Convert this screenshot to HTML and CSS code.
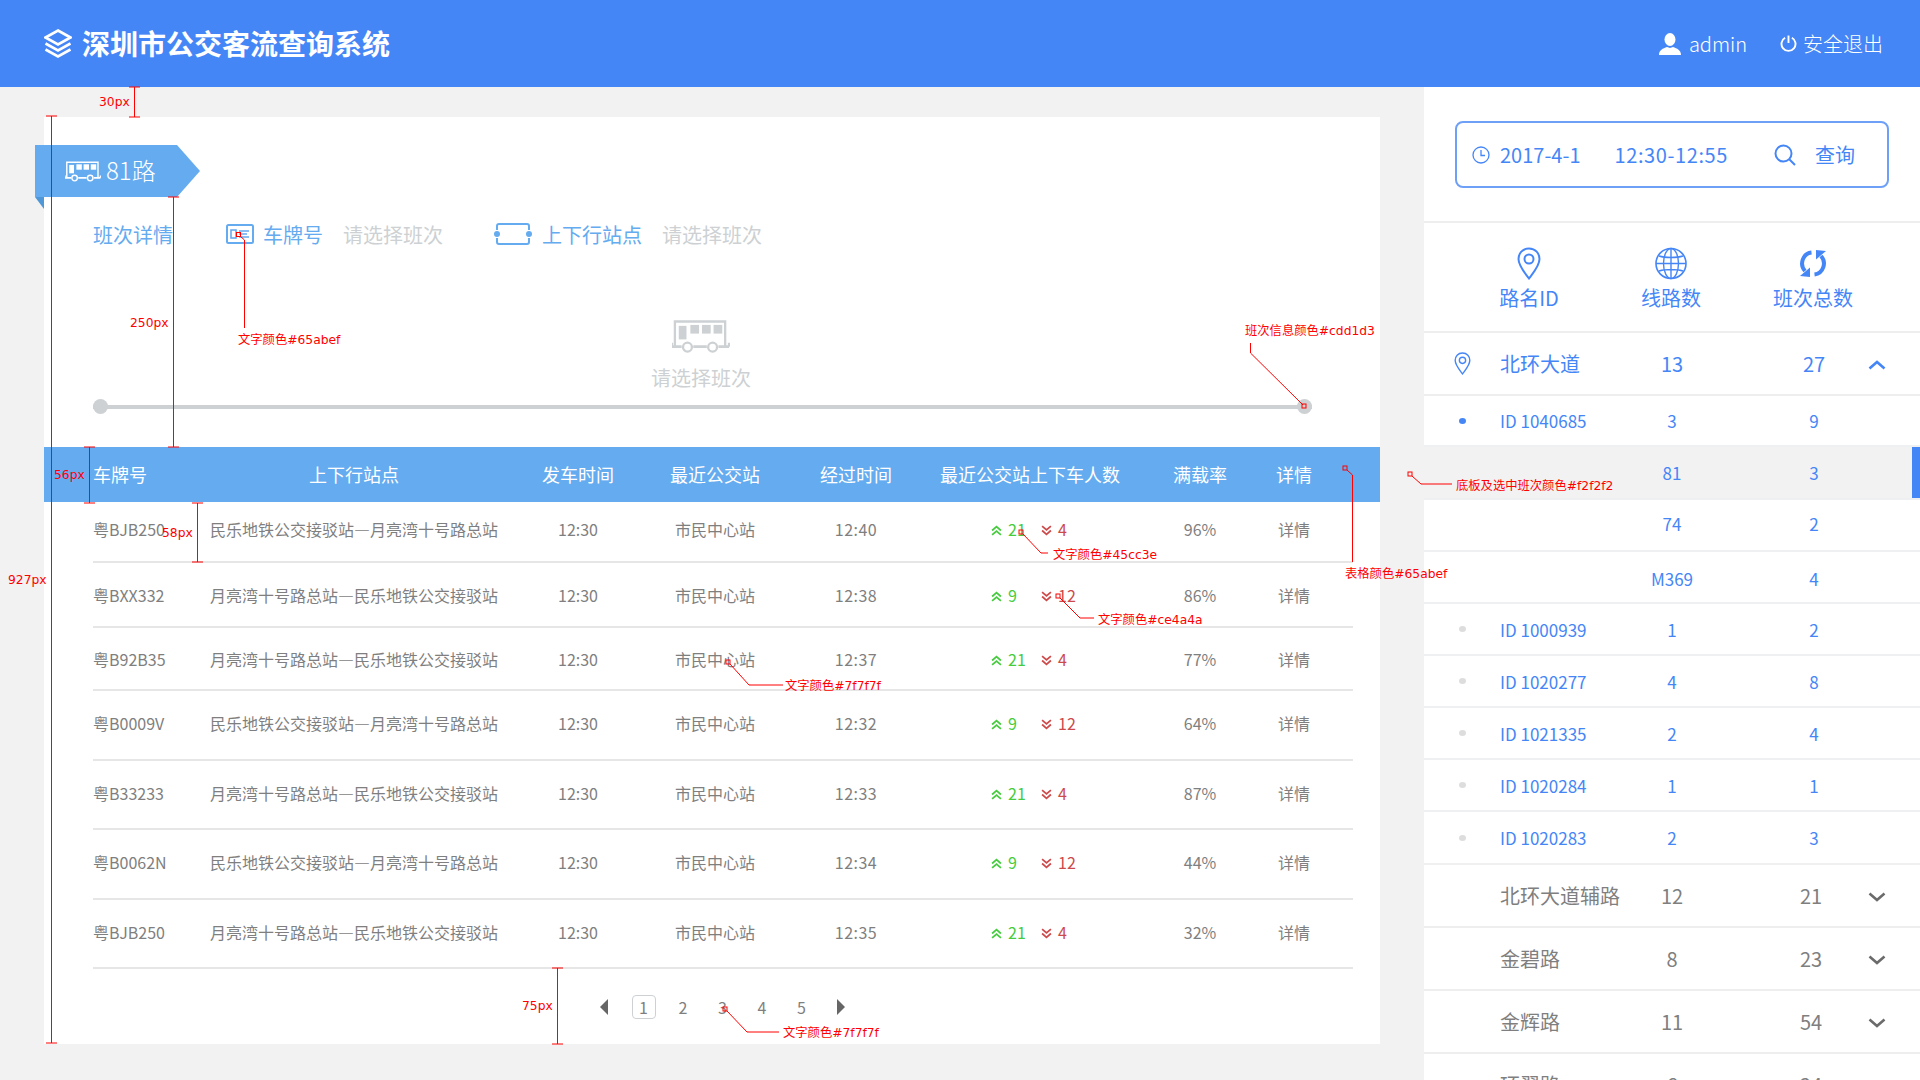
FILE: index.html
```html
<!DOCTYPE html>
<html lang="zh-CN">
<head>
    <meta charset="UTF-8">
    <title>深圳市公交客流查询系统</title>
    <link rel="stylesheet" href="styles.css">
</head>
<body>
    <svg class="defs" width="0" height="0">
        <symbol id="bus" viewBox="0 0 60 34">
            <path d="M3 27V1.5H55V27" fill="none" stroke="currentColor" stroke-width="2.4"/>
            <path d="M0 27.5H10M22 27.5H36M48 27.5H59" fill="none" stroke="currentColor" stroke-width="3"/>
            <path d="M0 23.5V27.5M59 23.5V27.5" fill="none" stroke="currentColor" stroke-width="2.4"/>
            <rect x="7" y="6" width="8" height="14" fill="currentColor"/>
            <rect x="19" y="5" width="9" height="9" fill="currentColor"/>
            <rect x="31" y="5" width="9" height="9" fill="currentColor"/>
            <rect x="43" y="5" width="9" height="9" fill="currentColor"/>
            <circle cx="16" cy="28" r="4.6" fill="none" stroke="currentColor" stroke-width="2.4"/>
            <circle cx="42" cy="28" r="4.6" fill="none" stroke="currentColor" stroke-width="2.4"/>
        </symbol>
        <symbol id="pin" viewBox="0 0 24 33">
            <path d="M12 1.5C5.5 1.5 1.5 6.5 1.5 12C1.5 19 8 26 12 31.5C16 26 22.5 19 22.5 12C22.5 6.5 18.5 1.5 12 1.5Z" fill="none" stroke="currentColor" stroke-width="2"/>
            <circle cx="12" cy="12" r="4.5" fill="none" stroke="currentColor" stroke-width="2"/>
        </symbol>
        <symbol id="up" viewBox="0 0 10 10">
            <path d="M1 5L5 1.5L9 5M1 9L5 5.5L9 9" fill="none" stroke="currentColor" stroke-width="1.6"/>
        </symbol>
        <symbol id="down" viewBox="0 0 10 10">
            <path d="M1 1L5 4.5L9 1M1 5L5 8.5L9 5" fill="none" stroke="currentColor" stroke-width="1.6"/>
        </symbol>
        <symbol id="chev-down" viewBox="0 0 18 10">
            <path d="M1.5 1.5L9 8L16.5 1.5" fill="none" stroke="currentColor" stroke-width="2.6"/>
        </symbol>
    </svg>

    <header class="topbar">
        <div class="brand">
            <svg class="brand-icon" viewBox="0 0 28 29">
                <path d="M14 1.5L26.5 8.5L14 15.5L1.5 8.5Z" fill="none" stroke="#fff" stroke-width="2.6"/>
                <path d="M1.5 14.5L14 21.5L26.5 14.5M1.5 20.5L14 27.5L26.5 20.5" fill="none" stroke="#fff" stroke-width="2.6"/>
            </svg>
            <h1 class="brand-title">深圳市公交客流查询系统</h1>
        </div>
        <div class="user-bar">
            <span class="user-item">
                <svg class="user-icon" viewBox="0 0 22 22">
                    <ellipse cx="11" cy="6.5" rx="5.5" ry="6.5" fill="#fff"/>
                    <path d="M0 22C0 17 4 15.5 8 14L11 15L14 14C18 15.5 22 17 22 22Z" fill="#fff"/>
                </svg>
                admin
            </span>
            <span class="user-item logout">
                <svg class="power-icon" viewBox="0 0 16 16">
                    <path d="M4.8 2.6A6.6 6.6 0 1 0 11.2 2.6" fill="none" stroke="#fff" stroke-width="1.8"/>
                    <path d="M8 0.5V7.5" fill="none" stroke="#fff" stroke-width="1.8"/>
                </svg>
                安全退出
            </span>
        </div>
    </header>

    <div class="layout">
        <main class="card">
            <div class="ribbon">
                <div class="ribbon-body">
                    <svg class="ribbon-bus"><use href="#bus"/></svg>
                    <span>81路</span>
                </div>
            </div>

            <div class="tabs">
                <span class="tab-title">班次详情</span>
                <svg class="plate-icon" viewBox="0 0 28 20">
                    <rect x="1" y="1" width="26" height="18" rx="1.5" fill="none" stroke="currentColor" stroke-width="2"/>
                    <rect x="5" y="6" width="5" height="8" fill="none" stroke="currentColor" stroke-width="1.6"/>
                    <path d="M13 7H23M13 10H21M13 13H23" fill="none" stroke="currentColor" stroke-width="1.6"/>
                </svg>
                <span class="tab-label">车牌号</span>
                <span class="tab-hint">请选择班次</span>
                <svg class="ticket-icon" viewBox="0 0 38 22">
                    <path d="M3 7V3C3 2 4 1 5 1H33C34 1 35 2 35 3V7M3 15V19C3 20 4 21 5 21H33C34 21 35 20 35 19V15" fill="none" stroke="currentColor" stroke-width="2"/>
                    <circle cx="3" cy="11" r="3" fill="currentColor"/>
                    <circle cx="35" cy="11" r="3" fill="currentColor"/>
                </svg>
                <span class="tab-label">上下行站点</span>
                <span class="tab-hint">请选择班次</span>
            </div>

            <div class="empty">
                <svg class="empty-bus"><use href="#bus"/></svg>
                <span>请选择班次</span>
            </div>

            <div class="timeline"></div>

            <div class="table">
                <div class="thead">
                    <div class="trow">
                        <span class="cell-left">车牌号</span>
                        <span>上下行站点</span>
                        <span>发车时间</span>
                        <span>最近公交站</span>
                        <span>经过时间</span>
                        <span>最近公交站上下车人数</span>
                        <span>满载率</span>
                        <span>详情</span>
                    </div>
                </div>
                <div class="tbody">
                    <div class="trow">
                        <span class="cell-left">粤BJB250</span>
                        <span>民乐地铁公交接驳站—月亮湾十号路总站</span>
                        <span>12:30</span>
                        <span>市民中心站</span>
                        <span class="pass-time">12:40</span>
                        <span class="flow">
                            <span class="flow-up"><svg class="arrow"><use href="#up"/></svg>21</span>
                            <span class="flow-down"><svg class="arrow"><use href="#down"/></svg>4</span>
                        </span>
                        <span>96%</span>
                        <span>详情</span>
                    </div>
                    <div class="trow">
                        <span class="cell-left">粤BXX332</span>
                        <span>月亮湾十号路总站—民乐地铁公交接驳站</span>
                        <span>12:30</span>
                        <span>市民中心站</span>
                        <span class="pass-time">12:38</span>
                        <span class="flow">
                            <span class="flow-up"><svg class="arrow"><use href="#up"/></svg>9</span>
                            <span class="flow-down"><svg class="arrow"><use href="#down"/></svg>12</span>
                        </span>
                        <span>86%</span>
                        <span>详情</span>
                    </div>
                    <div class="trow">
                        <span class="cell-left">粤B92B35</span>
                        <span>月亮湾十号路总站—民乐地铁公交接驳站</span>
                        <span>12:30</span>
                        <span>市民中心站</span>
                        <span class="pass-time">12:37</span>
                        <span class="flow">
                            <span class="flow-up"><svg class="arrow"><use href="#up"/></svg>21</span>
                            <span class="flow-down"><svg class="arrow"><use href="#down"/></svg>4</span>
                        </span>
                        <span>77%</span>
                        <span>详情</span>
                    </div>
                    <div class="trow">
                        <span class="cell-left">粤B0009V</span>
                        <span>民乐地铁公交接驳站—月亮湾十号路总站</span>
                        <span>12:30</span>
                        <span>市民中心站</span>
                        <span class="pass-time">12:32</span>
                        <span class="flow">
                            <span class="flow-up"><svg class="arrow"><use href="#up"/></svg>9</span>
                            <span class="flow-down"><svg class="arrow"><use href="#down"/></svg>12</span>
                        </span>
                        <span>64%</span>
                        <span>详情</span>
                    </div>
                    <div class="trow">
                        <span class="cell-left">粤B33233</span>
                        <span>月亮湾十号路总站—民乐地铁公交接驳站</span>
                        <span>12:30</span>
                        <span>市民中心站</span>
                        <span class="pass-time">12:33</span>
                        <span class="flow">
                            <span class="flow-up"><svg class="arrow"><use href="#up"/></svg>21</span>
                            <span class="flow-down"><svg class="arrow"><use href="#down"/></svg>4</span>
                        </span>
                        <span>87%</span>
                        <span>详情</span>
                    </div>
                    <div class="trow">
                        <span class="cell-left">粤B0062N</span>
                        <span>民乐地铁公交接驳站—月亮湾十号路总站</span>
                        <span>12:30</span>
                        <span>市民中心站</span>
                        <span class="pass-time">12:34</span>
                        <span class="flow">
                            <span class="flow-up"><svg class="arrow"><use href="#up"/></svg>9</span>
                            <span class="flow-down"><svg class="arrow"><use href="#down"/></svg>12</span>
                        </span>
                        <span>44%</span>
                        <span>详情</span>
                    </div>
                    <div class="trow">
                        <span class="cell-left">粤BJB250</span>
                        <span>月亮湾十号路总站—民乐地铁公交接驳站</span>
                        <span>12:30</span>
                        <span>市民中心站</span>
                        <span class="pass-time">12:35</span>
                        <span class="flow">
                            <span class="flow-up"><svg class="arrow"><use href="#up"/></svg>21</span>
                            <span class="flow-down"><svg class="arrow"><use href="#down"/></svg>4</span>
                        </span>
                        <span>32%</span>
                        <span>详情</span>
                    </div>
                </div>
            </div>

            <div class="pager">
                <span class="page-item"><i class="tri-left"></i></span>
                <span class="page-item current">1</span>
                <span class="page-item">2</span>
                <span class="page-item">3</span>
                <span class="page-item">4</span>
                <span class="page-item">5</span>
                <span class="page-item"><i class="tri-right"></i></span>
            </div>
        </main>

        <aside class="sidebar">
            <div class="search-wrap">
                <div class="search-box">
                    <svg class="clock-icon" viewBox="0 0 18 18">
                        <circle cx="9" cy="9" r="8" fill="none" stroke="currentColor" stroke-width="1.3"/>
                        <path d="M9 4V9.5H13" fill="none" stroke="currentColor" stroke-width="1.3"/>
                    </svg>
                    <span class="search-date">2017-4-1</span>
                    <span class="search-time">12:30-12:55</span>
                    <svg class="search-icon" viewBox="0 0 22 22">
                        <circle cx="9.5" cy="9.5" r="8" fill="none" stroke="currentColor" stroke-width="2"/>
                        <path d="M15 15L21 21" fill="none" stroke="currentColor" stroke-width="2"/>
                    </svg>
                    <span class="search-btn">查询</span>
                </div>
            </div>

            <div class="stat-head">
                <div class="stat-col">
                    <svg class="stat-icon pin-lg"><use href="#pin"/></svg>
                    <span>路名ID</span>
                </div>
                <div class="stat-col">
                    <svg class="stat-icon" viewBox="0 0 32 32" width="32" height="32">
                        <circle cx="16" cy="16" r="15" fill="none" stroke="currentColor" stroke-width="1.6"/>
                        <ellipse cx="16" cy="16" rx="7.5" ry="15" fill="none" stroke="currentColor" stroke-width="1.4"/>
                        <path d="M16 1V31M1 16H31M4 8.5C10 10.5 22 10.5 28 8.5M4 23.5C10 21.5 22 21.5 28 23.5" fill="none" stroke="currentColor" stroke-width="1.4"/>
                    </svg>
                    <span>线路数</span>
                </div>
                <div class="stat-col">
                    <svg class="stat-icon" viewBox="0 0 28 29" width="28" height="29">
                        <path d="M12.5 3.5A10.5 11 0 0 0 6 22" fill="none" stroke="currentColor" stroke-width="4"/>
                        <path d="M11 18.5V28L1 27Z" fill="currentColor"/>
                        <path d="M15.5 25.5A10.5 11 0 0 0 22 7" fill="none" stroke="currentColor" stroke-width="4"/>
                        <path d="M17 10.5V1L27 2Z" fill="currentColor"/>
                    </svg>
                    <span>班次总数</span>
                </div>
            </div>

            <div class="route route-open">
                <svg class="route-pin"><use href="#pin"/></svg>
                <span class="route-name">北环大道</span>
                <span>13</span>
                <span>27</span>
                <svg class="chev chev-up"><use href="#chev-down"/></svg>
            </div>
            <div class="sub-row"><i class="dot dot-on"></i><span class="route-name">ID 1040685</span><span>3</span><span>9</span></div>
            <div class="sub-row selected"><i></i><span class="route-name"></span><span>81</span><span>3</span></div>
            <div class="sub-row row-up"><i></i><span class="route-name"></span><span>74</span><span>2</span></div>
            <div class="sub-row row-down"><i></i><span class="route-name"></span><span>M369</span><span>4</span></div>
            <div class="sub-row"><i class="dot"></i><span class="route-name">ID 1000939</span><span>1</span><span>2</span></div>
            <div class="sub-row"><i class="dot"></i><span class="route-name">ID 1020277</span><span>4</span><span>8</span></div>
            <div class="sub-row"><i class="dot"></i><span class="route-name">ID 1021335</span><span>2</span><span>4</span></div>
            <div class="sub-row"><i class="dot"></i><span class="route-name">ID 1020284</span><span>1</span><span>1</span></div>
            <div class="sub-row row-last"><i class="dot"></i><span class="route-name">ID 1020283</span><span>2</span><span>3</span></div>
            <div class="route"><i></i><span class="route-name">北环大道辅路</span><span>12</span><span class="shift">21</span><svg class="chev"><use href="#chev-down"/></svg></div>
            <div class="route"><i></i><span class="route-name">金碧路</span><span>8</span><span class="shift">23</span><svg class="chev"><use href="#chev-down"/></svg></div>
            <div class="route"><i></i><span class="route-name">金辉路</span><span>11</span><span class="shift">54</span><svg class="chev"><use href="#chev-down"/></svg></div>
            <div class="route"><i></i><span class="route-name">环翠路</span><span>6</span><span class="shift">24</span><svg class="chev"><use href="#chev-down"/></svg></div>
        </aside>
    </div>

    <!-- 标注层 -->
    <svg class="notes" viewBox="0 0 1920 1080" width="1920" height="1080">
        <g class="note-lines">
            <path d="M129 87H140M134.500 87V117M129 117H140"/>
            <path d="M46 116H57M51.500 116V1043M46 1043H57"/>
            <path d="M168 197H179M173.500 197V447M168 447H179"/>
            <path d="M84 447H95M89.500 447V503M84 503H95"/>
            <path d="M192 503H203M197.500 503V562M192 562H203"/>
            <path d="M552 968H563M557.500 968V1044M552 1044H563"/>
            <path d="M240 236L244.500 240V328"/>
            <path d="M1250.500 343V353L1303 405"/>
            <path d="M1023 534L1041 553H1048"/>
            <path d="M1060 598L1080 618H1094"/>
            <path d="M730 664L749 685H783"/>
            <path d="M727 1011L747 1032H779"/>
            <path d="M1347 470L1352.500 475V562"/>
            <path d="M1412 476L1421 484H1452"/>
            <rect x="236.500" y="232.500" width="4" height="4"/>
            <rect x="1302" y="404" width="4" height="4"/>
            <rect x="1019" y="530" width="4" height="4"/>
            <rect x="1056" y="594" width="4" height="4"/>
            <rect x="726" y="660" width="4" height="4"/>
            <rect x="723" y="1007" width="4" height="4"/>
            <rect x="1343" y="466" width="4" height="4"/>
            <rect x="1408" y="472" width="4" height="4"/>
        </g>
        <g class="note-text">
            <text x="99" y="106">30px</text>
            <text x="8" y="584">927px</text>
            <text x="130" y="327">250px</text>
            <text x="54" y="479">56px</text>
            <text x="162" y="537">58px</text>
            <text x="522" y="1010">75px</text>
            <text x="238" y="344">文字颜色#65abef</text>
            <text x="1245" y="335">班次信息颜色#cdd1d3</text>
            <text x="1053" y="559">文字颜色#45cc3e</text>
            <text x="1098" y="624">文字颜色#ce4a4a</text>
            <text x="785" y="690">文字颜色#7f7f7f</text>
            <text x="783" y="1037">文字颜色#7f7f7f</text>
            <text x="1345" y="578">表格颜色#65abef</text>
            <text x="1456" y="490">底板及选中班次颜色#f2f2f2</text>
        </g>
    </svg>
</body>
</html>
```

FILE: styles.css
```css
* {
    box-sizing: border-box;
}
html, body {
    margin: 0;
    height: 1080px;
    overflow: hidden;
}
body {
    position: relative;
    background: #f2f2f2;
    font-family: "Noto Sans CJK SC", "Noto Sans", sans-serif;
    font-weight: 400;
    color: #7f7f7f;
}
.defs {
    position: absolute;
}
.topbar {
    height: 87px;
    background: #4586f7;
    color: #fff;
    display: flex;
    justify-content: space-between;
    align-items: center;
    padding: 0 37px 0 44px;
}
.brand {
    display: flex;
    align-items: center;
    gap: 10px;
}
.brand-icon {
    width: 28px;
    height: 29px;
}
.brand-title {
    margin: 0 0 2px;
    font-size: 28px;
    font-weight: 700;
    line-height: 40px;
}
.user-bar {
    display: flex;
    gap: 33px;
    font-size: 20px;
    font-weight: 300;
}
.user-item {
    display: flex;
    align-items: center;
    gap: 8px;
}
.user-icon {
    width: 22px;
    height: 22px;
}
.logout {
    gap: 6px;
}
.power-icon {
    width: 17px;
    height: 17px;
}
.layout {
    display: flex;
    height: 993px;
}

/* 左侧主面板 */
.card {
    width: 1336px;
    height: 927px;
    margin: 30px 0 0 44px;
    background: #fff;
}
.ribbon {
    position: relative;
    width: 165px;
    height: 52px;
    margin: 28px 0 0 -9px;
}
.ribbon::after {
    content: "";
    position: absolute;
    left: 0;
    top: 52px;
    border-top: 12px solid #4f97d6;
    border-left: 9px solid transparent;
}
.ribbon-body {
    height: 52px;
    background: #65abef;
    clip-path: polygon(0 0, 142px 0, 165px 50%, 142px 100%, 0 100%);
    color: #fff;
    display: flex;
    align-items: center;
    gap: 5px;
    padding: 0 0 3px 30px;
    font-size: 24px;
    font-weight: 300;
}
.ribbon-bus {
    width: 36px;
    height: 21px;
    margin-top: 3px;
}
.tabs {
    display: flex;
    align-items: center;
    height: 30px;
    margin-top: 22px;
    padding-left: 49px;
    font-size: 20px;
    color: #65abef;
}
.plate-icon {
    width: 28px;
    height: 20px;
    margin: 0 9px 0 53px;
}
.ticket-icon {
    width: 38px;
    height: 22px;
    margin: 0 10px 0 51px;
}
.tab-hint {
    margin-left: 20px;
    color: #cdd1d3;
}
.empty {
    display: flex;
    flex-direction: column;
    align-items: center;
    margin: 71px 0 0 -22px;
    font-size: 20px;
    color: #cdd1d3;
}
.empty-bus {
    width: 58px;
    height: 33px;
    margin-bottom: 10px;
}
.empty span {
    line-height: 30px;
}
.timeline {
    height: 15px;
    width: 1219px;
    margin: 6px 0 0 49px;
    display: flex;
    align-items: center;
    justify-content: space-between;
    background: linear-gradient(#cdd1d3, #cdd1d3) center / 100% 4px no-repeat;
}
.timeline::before,
.timeline::after {
    content: "";
    width: 15px;
    height: 15px;
    border-radius: 50%;
    background: #cdd1d3;
}

/* 表格 */
.table {
    margin-top: 33px;
}
.thead {
    height: 55px;
    background: #65abef;
    color: #fff;
    font-size: 18px;
}
.thead .trow {
    height: 55px;
    padding-bottom: 2px;
}
.trow {
    display: grid;
    grid-template-columns: 107px 308px 140px 134px 148px 200px 140px 48px;
    align-items: center;
    margin: 0 27px 0 49px;
    text-align: center;
    white-space: nowrap;
}
.cell-left {
    text-align: left;
}
.tbody {
    font-size: 16px;
}
.tbody .trow {
    height: 69.500px;
    padding-bottom: 3px;
    border-bottom: 2px solid #e6e6e6;
}
.tbody .trow:nth-child(1) {
    height: 61px;
    padding-bottom: 5px;
}
.tbody .trow:nth-child(2) {
    height: 65px;
    padding: 0;
}
.tbody .trow:nth-child(3) {
    height: 63px;
    padding: 0;
}
.pass-time {
    letter-spacing: 0.500px;
}
.flow {
    display: flex;
    padding-left: 61px;
    text-align: left;
}
.flow-up {
    width: 50px;
    color: #45cc3e;
}
.flow-down {
    color: #ce4a4a;
}
.arrow {
    width: 11px;
    height: 11px;
    margin-right: 6px;
}
.pager {
    display: flex;
    align-items: center;
    gap: 15.500px;
    height: 75px;
    padding-left: 548px;
    font-size: 16px;
}
.page-item {
    width: 24px;
    height: 24px;
    display: flex;
    align-items: center;
    justify-content: center;
}
.current {
    border: 1px solid #cdd1d3;
    border-radius: 4px;
}
.tri-left {
    border: 8px solid transparent;
    border-left: 0;
    border-right: 8px solid #666;
}
.tri-right {
    border: 8px solid transparent;
    border-right: 0;
    border-left: 8px solid #666;
}

/* 右侧栏 */
.sidebar {
    width: 496px;
    margin-left: 44px;
    height: 993px;
    overflow: hidden;
    background: #fff;
    color: #4586f7;
}
.search-wrap {
    height: 136px;
    padding: 34px 0 0 31px;
    border-bottom: 2px solid #eee;
}
.search-box {
    display: flex;
    align-items: center;
    width: 434px;
    height: 67px;
    padding-left: 15px;
    border: 2px solid #6ea0f8;
    border-radius: 8px;
    font-size: 20px;
}
.clock-icon {
    width: 18px;
    height: 18px;
    margin-right: 10px;
}
.search-date {
    margin-right: -2px;
}
.search-time {
    margin-left: 36px;
    letter-spacing: 0.600px;
}
.search-icon {
    width: 22px;
    height: 22px;
    margin: 0 19px 0 46px;
}
.stat-head {
    display: flex;
    height: 110px;
    padding: 24px 0 0 34px;
    border-bottom: 2px solid #eee;
    font-size: 20px;
}
.stat-col {
    width: 142px;
    display: flex;
    flex-direction: column;
    align-items: center;
    height: 80px;
}
.stat-icon {
    height: 33px;
}
.stat-col span {
    line-height: 30px;
    margin-top: 3px;
}
.pin-lg {
    width: 24px;
}
.route,
.sub-row {
    position: relative;
    display: grid;
    grid-template-columns: 76px 101px 142px 142px;
    align-items: center;
    text-align: center;
    white-space: nowrap;
}
.route {
    height: 63px;
    font-size: 20px;
    color: #7f7f7f;
    border-bottom: 2px solid #eee;
}
.route-open {
    color: #4586f7;
}
.route-name {
    text-align: left;
}
.route-pin {
    width: 17px;
    height: 23px;
    justify-self: center;
    color: #4586f7;
}
.shift {
    padding-right: 6px;
}
.sub-row {
    height: 52px;
    font-size: 17px;
    border-bottom: 2px solid #eef0f2;
}
.route-open + .sub-row {
    height: 51px;
}
.selected {
    height: 53px;
    background: #f2f2f2;
}
.selected::after {
    content: "";
    position: absolute;
    right: 0;
    top: 0;
    bottom: 0;
    width: 8px;
    background: #4586f7;
}
.row-up {
    padding-bottom: 3px;
}
.row-down {
    padding-top: 2px;
}
.row-last {
    height: 53px;
}
.dot {
    justify-self: center;
    width: 7px;
    height: 6px;
    border-radius: 50%;
    background: #ddd;
}
.dot-on {
    background: #4586f7;
}
.chev {
    position: absolute;
    right: 34px;
    top: 27px;
    width: 18px;
    height: 10px;
    color: #6b6b6b;
}
.route-open .chev {
    color: #4586f7;
}
.chev-up {
    transform: rotate(180deg);
}

/* 标注层 */
.notes {
    position: absolute;
    left: 0;
    top: 0;
    pointer-events: none;
}
.note-lines path,
.note-lines rect {
    fill: none;
    stroke: #f00;
    stroke-width: 1;
}
.note-text text {
    fill: #f00;
    font-family: "DejaVu Sans", "Noto Sans CJK SC", sans-serif;
    font-size: 12.300px;
    font-weight: 400;
}
```
